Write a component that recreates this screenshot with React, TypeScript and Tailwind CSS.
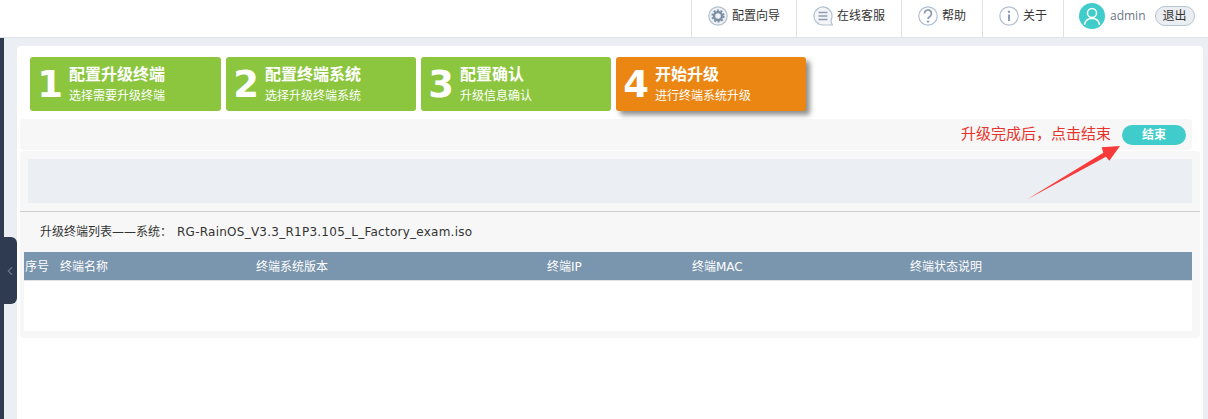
import { ChevronLeft } from "lucide-react";

const cjk = "font-['Open_Sans','Noto_Sans_CJK_SC',sans-serif]";

const steps = [
  { n: "1", title: "配置升级终端", sub: "选择需要升级终端", w: "w-[191px]" },
  { n: "2", title: "配置终端系统", sub: "选择升级终端系统", w: "w-[190px]" },
  { n: "3", title: "配置确认", sub: "升级信息确认", w: "w-[190px]" },
  { n: "4", title: "开始升级", sub: "进行终端系统升级", w: "w-[190px]", active: true },
];

const columns = [
  { label: "序号", w: "w-[35px]" },
  { label: "终端名称", w: "w-[196px]" },
  { label: "终端系统版本", w: "w-[291px]" },
  { label: "终端IP", w: "w-[145px]" },
  { label: "终端MAC", w: "w-[218px]" },
  { label: "终端状态说明", w: "flex-1" },
];

function GearIcon() {
  return (
    <svg viewBox="0 0 20 20" className="h-5 w-5">
      <circle cx="10" cy="10" r="9.2" fill="#eef1f5" stroke="#b4c0d0" strokeWidth="1.2" />
      <circle cx="10" cy="10" r="4" fill="none" stroke="#7e8ea3" strokeWidth="2.4" />
      <circle cx="10" cy="10" r="5.8" fill="none" stroke="#7e8ea3" strokeWidth="1.6" strokeDasharray="2 1.65" />
    </svg>
  );
}

function ChatIcon() {
  return (
    <svg viewBox="0 0 20 20" className="h-5 w-5" fill="none" stroke="#b4c0d0">
      <path d="M19.5 19h-9.500a9 9 0 1 1 8.200-5.300c-.4 1 .1 3.300 1.300 5.300z" strokeWidth="1.2" fill="#f3f5f8" />
      <path d="M5.500 6.500h9M5.500 10h9M5.500 13.500h9" strokeWidth="1.300" stroke="#8e9db1" />
    </svg>
  );
}

function HelpIcon() {
  return (
    <svg viewBox="0 0 20 20" className="h-5 w-5" fill="none">
      <circle cx="10" cy="10" r="9.2" stroke="#b4c0d0" strokeWidth="1.2" />
      <path d="M6.500 7.500a3.500 3.500 0 1 1 5.400 2.900c-1.300.8-1.900 1.300-1.900 2.600" stroke="#8e9db1" strokeWidth="1.800" />
      <circle cx="10" cy="15.600" r="1.200" fill="#8e9db1" />
    </svg>
  );
}

function InfoIcon() {
  return (
    <svg viewBox="0 0 20 20" className="h-5 w-5" fill="none">
      <circle cx="10" cy="10" r="9.2" stroke="#b4c0d0" strokeWidth="1.2" />
      <circle cx="10" cy="5.800" r="1.200" fill="#8e9db1" />
      <path d="M10 8.500v6.500" stroke="#8e9db1" strokeWidth="2" />
    </svg>
  );
}

function NavItem({ icon, label, w }: { icon: React.ReactNode; label: string; w: string }) {
  return (
    <div className={`flex h-full items-center justify-center gap-[4px] border-l border-[#dde2e8] pb-[5px] ${w}`}>
      {icon}
      <span className="text-[12px] text-[#333]">{label}</span>
    </div>
  );
}

export default function App() {
  return (
    <div className={`relative flex h-[419px] w-[1208px] flex-col overflow-hidden bg-[#ebeff3] ${cjk}`}>
      <header className="flex h-[38px] shrink-0 justify-end border-b border-[#dfe3e8] bg-white">
        <NavItem icon={<GearIcon />} label="配置向导" w="w-[105px]" />
        <NavItem icon={<ChatIcon />} label="在线客服" w="w-[105px]" />
        <NavItem icon={<HelpIcon />} label="帮助" w="w-[81px]" />
        <NavItem icon={<InfoIcon />} label="关于" w="w-[81px]" />
        <div className="flex h-full w-[145px] items-center border-l border-[#dde2e8] pb-[6px] pl-[15px]">
          <div className="flex h-[26px] w-[26px] items-center justify-center rounded-full bg-[#3fcccb]">
            <svg viewBox="0 0 20 20" className="h-[20px] w-[20px]" fill="none" stroke="white" strokeWidth="1.500">
              <circle cx="10" cy="7" r="4.500" />
              <path d="M2.500 19c.5-4.500 3-6.500 7.500-6.500s7 2 7.500 6.500" />
            </svg>
          </div>
          <span className="ml-[5px] text-[12px] text-[#6b7686]">admin</span>
          <span className="ml-[9px] flex h-[20px] w-[40px] items-center justify-center rounded-full border border-[#b9c4d1] bg-[#eaedf1] text-[12px] text-[#333]">
            退出
          </span>
        </div>
      </header>

      <div className="flex min-h-0 flex-1">
        <aside className="w-[4px] shrink-0 bg-[#2f3b50]" />
        <main className="ml-[13px] mr-[5px] mt-[8px] flex-1 rounded-t-[4px] bg-white">
          <div className="flex gap-[5px] pl-[13px] pt-[11px]">
            {steps.map((s) => (
              <div
                key={s.n}
                className={`flex h-[54px] items-center rounded-[3px] pl-[7px] text-white ${s.w} ${
                  s.active ? "bg-[#ec8612] shadow-[4px_4px_5px_rgba(70,70,70,0.6)]" : "bg-[#8cc63f]"
                }`}
              >
                <span className="w-[26px] text-center font-['DejaVu_Sans',sans-serif] text-[37px] leading-none font-bold">
                  {s.n}
                </span>
                <div className="ml-[6px]">
                  <div className="text-[16px] leading-[20px] font-bold">{s.title}</div>
                  <div className="mt-[4px] text-[12px] leading-[16px]">{s.sub}</div>
                </div>
              </div>
            ))}
          </div>

          <div className="ml-[3px] mr-[11px] mt-[8px] flex h-[31px] items-center justify-end rounded-[4px] bg-[#f7f7f7] pr-[6px]">
            <span className="mb-[3px] text-[15px] text-[#e8332d]">升级完成后，点击结束</span>
            <span className="ml-[11px] flex h-[20px] w-[64px] items-center justify-center rounded-full bg-[#3fcccb] text-[12px] font-bold text-white">
              结束
            </span>
          </div>

          <div className="ml-[3px] mr-[3px] mt-[1px] h-[187px] rounded-[4px] bg-[#f7f7f7]">
            <div className="ml-[8px] mr-[8px] h-[52px] pt-[8px]">
              <div className="h-[44px] bg-[#ebeef3]" />
            </div>
            <div className="mt-[8px] h-[1px] bg-[#cccccc]" />
            <div className="flex h-[40px] items-center pl-[20px] font-['DejaVu_Sans','Noto_Sans_CJK_SC',sans-serif] text-[12px] text-[#333]">
              <span>升级终端列表——系统：</span>
              <span className="ml-[5px] tracking-[0.25px]">RG-RainOS_V3.3_R1P3.105_L_Factory_exam.iso</span>
            </div>
            <div className="ml-[4px] mr-[8px]">
              <div className="flex h-[29px] items-center border-b border-[#dfe3e8] bg-[#7a95ae] pl-[1px] pt-[2px] font-['DejaVu_Sans','Noto_Sans_CJK_SC',sans-serif] text-[12px] text-white">
                {columns.map((c) => (
                  <div key={c.label} className={c.w}>
                    {c.label}
                  </div>
                ))}
              </div>
              <div className="h-[50px] bg-white" />
            </div>
          </div>
        </main>
      </div>

      {/* sidebar collapse handle */}
      <div className="absolute left-0 top-[237px] flex h-[67px] w-[17px] items-center justify-center rounded-r-[6px] bg-[#2f3b50] pl-[3px]">
        <ChevronLeft className="h-[18px] w-[18px] text-[#66758b]" />
      </div>

      {/* red annotation arrow */}
      <svg className="absolute left-[1020px] top-[140px] h-[64px] w-[106px]" viewBox="1020 140 106 64">
        <path d="M1027.300 199.300L1103.300 152.700L1101.700 147.300L1120 146L1109.300 160.700L1106 156.700Z" fill="#f83a3a" />
      </svg>
    </div>
  );
}
